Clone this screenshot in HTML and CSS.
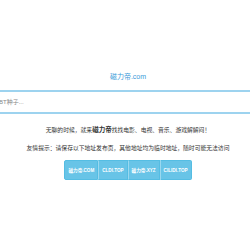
FILE: index.html
```html
<!DOCTYPE html>
<html lang="zh-CN">
<head>
    <meta charset="UTF-8">
    <title>磁力帝</title>
    <link rel="stylesheet" href="styles.css">
</head>
<body>
    <div class="searchbox">
        <div class="logo">磁力帝.com</div>
        <input type="text" class="search" placeholder="输入关键字搜索的BT种子...">
    </div>
    <div class="page">
        <p class="intro">无聊的时候，就来<b>磁力帝</b>找找电影、电视、音乐、游戏解解闷！</p>
        <p class="tip">友情提示：请保存以下地址发布页，其他地址均为临时地址，随时可能无法访问</p>
        <div class="links">
            <a class="btn" href="#">磁力帝.COM</a><a class="btn" href="#">CLDI.TOP</a><a class="btn" href="#">磁力帝.XYZ</a><a class="btn" href="#">CILIDI.TOP</a>
        </div>
    </div>
</body>
</html>
```

FILE: styles.css
```css
body{
    margin: 0;
    padding: 0;

    background-color: #fff;

    font-family: "Liberation Sans", "Noto Sans CJK SC", sans-serif;

    overflow: hidden;
}

.searchbox{
    padding-top: 72px;

    text-align: center;
}

.logo{
    height: 10px;
    line-height: 10px;

    padding-left: 6px;
    margin-bottom: 8px;

    font-size: 7px;
    color: #3a9ad9;
}

.search{
    display: block;

    box-sizing: border-box;
    width: 100%;
    height: 24px;

    padding: 0;

    border: 0;
    border-top: 2px solid #9dd3ef;
    border-bottom: 2px solid #9dd3ef;

    font-size: 6px;
    font-family: "Liberation Sans", "Noto Sans CJK SC", sans-serif;
    text-align: left;
    text-indent: -49px;

    outline: none;
}

.search::placeholder{
    color: #888;
}

.page{
    padding-left: 6px;

    text-align: center;
}

.intro,
.tip{
    margin: 0;

    height: 10px;
    line-height: 10px;

    font-size: 5.8px;
    color: #333;
}

.intro{
    margin-top: 11px;
}

.intro b{
    font-size: 6.5px;
}

.tip{
    margin-top: 8px;
}

.links{
    display: inline-flex;

    margin-top: 7px;
}

.btn{
    display: block;

    height: 20px;
    line-height: 20px;

    padding: 0 3px;

    border: 1px solid #55bde3;
    border-left-color: #9ad8ef;

    background-color: #68c4e7;

    font-size: 4.6px;
    font-weight: bold;
    color: #fff;
    text-decoration: none;
    box-sizing: border-box;
}

.btn:first-child{
    border-left-color: #55bde3;
    border-radius: 2px 0 0 2px;
}

.btn:last-child{
    border-radius: 0 2px 2px 0;
}
```
